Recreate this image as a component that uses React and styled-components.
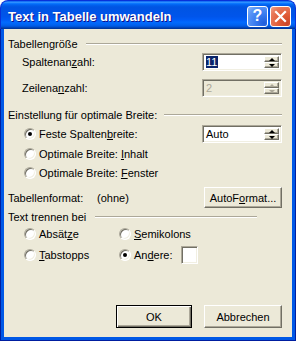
import React from 'react';
import styled, { createGlobalStyle, css } from 'styled-components';

const GlobalStyle = createGlobalStyle`
  html, body {
    margin: 0;
    padding: 0;
    background: #fff;
  }
  body {
    font-family: "Liberation Sans", Arial, sans-serif;
  }
  * {
    box-sizing: border-box;
  }
`;

const Window = styled.div`
  width: 296px;
  height: 341px;
  display: flex;
  flex-direction: column;
`;

const TitleBar = styled.div`
  height: 29px;
  flex: none;
  display: flex;
  align-items: center;
  justify-content: space-between;
  padding: 0 4px 0 7px;
  border-radius: 8px 8px 0 0;
  border: 1px solid #0831d9;
  border-bottom: none;
  background: linear-gradient(
    180deg,
    #0058ee 0%,
    #3593ff 4%,
    #288eff 6%,
    #127dff 8%,
    #036ffc 10%,
    #0262ee 14%,
    #0057e5 20%,
    #0054e3 24%,
    #0055eb 56%,
    #005bf5 66%,
    #026afe 76%,
    #0062ef 86%,
    #0052d6 92%,
    #0040ab 96%,
    #003092 100%
  );
`;

const Title = styled.span`
  color: #fff;
  font: bold 13px "Liberation Sans", Arial, sans-serif;
  text-shadow: 1px 1px #0f1089;
  padding-top: 2px;
`;

const Controls = styled.div`
  display: flex;
  gap: 2px;
  margin-top: 2px;
`;

const CapButton = styled.div`
  width: 21px;
  height: 21px;
  border: 1px solid #fff;
  border-radius: 3px;
  display: flex;
  align-items: center;
  justify-content: center;
  color: #fff;
  font: bold 16px "Liberation Sans", Arial, sans-serif;
  ${(p) =>
    p.kind === 'close'
      ? css`
          background: radial-gradient(circle at 85% 85%, #cc4628 0%, #e05a35 35%, #e8795a 75%, #f2a48c 100%);
        `
      : css`
          background: radial-gradient(circle at 85% 85%, #1f5ddb 0%, #3a7cf0 40%, #5b96f6 75%, #8cb8fa 100%);
        `}
`;

const Frame = styled.div`
  flex: 1;
  display: flex;
  background: #0058e6;
  border: 1px solid #001ea0;
  border-top: none;
  padding: 0 3px 3px;
`;

const Client = styled.div`
  flex: 1;
  display: flex;
  flex-direction: column;
  background: #ece9d8;
  padding: 6px 10px 9px 4px;
  font-size: 11px;
  color: #000;
`;

const GroupHeader = styled.div`
  display: flex;
  align-items: center;
  height: ${(p) => p.h || 18}px;
  margin-top: ${(p) => p.mt || 0}px;
  margin-right: ${(p) => p.mr || 0}px;
  gap: ${(p) => p.gap || 8}px;
`;

const Rule = styled.div`
  flex: 1;
  height: 2px;
  border-top: 1px solid #aca899;
  border-bottom: 1px solid #fff;
`;

const Row = styled.div`
  display: flex;
  align-items: center;
  height: ${(p) => p.h || 20}px;
  margin-top: ${(p) => p.mt || 0}px;
  padding-left: ${(p) => p.indent || 0}px;
`;

const Label = styled.span`
  flex: ${(p) => (p.w ? 'none' : 1)};
  width: ${(p) => (p.w ? `${p.w}px` : 'auto')};
  white-space: nowrap;
`;

const Sunken = styled.div`
  display: flex;
  align-items: stretch;
  width: ${(p) => p.w}px;
  height: ${(p) => p.h}px;
  margin-left: ${(p) => p.ml || 0}px;
  background: ${(p) => (p.disabled ? '#ece9d8' : '#fff')};
  border: 1px solid;
  border-color: #aca899 #fff #fff #aca899;
  box-shadow: inset 1px 1px #716f64, inset -1px -1px #f1efe2;
  padding: 2px;
`;

const Value = styled.div`
  flex: 1;
  display: flex;
  align-items: center;
  padding-left: 1px;
  color: ${(p) => (p.disabled ? '#aca899' : '#000')};
`;

const Selected = styled.span`
  background: #0a246a;
  color: #fff;
  padding: 0 1px 0 0;
  line-height: 12px;
`;

const Spinner = styled.div`
  width: 15px;
  display: flex;
  flex-direction: column;
`;

const SpinButton = styled.div`
  flex: 1;
  display: flex;
  align-items: center;
  justify-content: center;
  background: #ece9d8;
  border: 1px solid;
  border-color: #fff #716f64 #716f64 #fff;
  box-shadow: inset -1px -1px #aca899;
`;

const Arrow = styled.div`
  width: 0;
  height: 0;
  border-left: 3px solid transparent;
  border-right: 3px solid transparent;
  ${(p) =>
    p.dir === 'up'
      ? css`border-bottom: 3px solid ${p.disabled ? '#aca899' : '#000'};`
      : css`border-top: 3px solid ${p.disabled ? '#aca899' : '#000'};`}
`;

const Choice = styled.label`
  display: flex;
  align-items: center;
  gap: 3px;
  width: ${(p) => (p.w ? `${p.w}px` : 'auto')};
  white-space: nowrap;
`;

const RadioDot = styled.span`
  width: 12px;
  height: 12px;
  flex: none;
  border-radius: 50%;
  background: #fff;
  border: 1px solid;
  border-color: #aca899 #fff #fff #aca899;
  box-shadow: inset 1px 1px #716f64, inset -1px -1px #f1efe2;
  display: flex;
  align-items: center;
  justify-content: center;
  &::after {
    content: '';
    width: 4px;
    height: 4px;
    border-radius: 50%;
    background: ${(p) => (p.checked ? '#000' : 'transparent')};
  }
`;

const PushButton = styled.button`
  width: ${(p) => p.w}px;
  height: ${(p) => p.h || 23}px;
  padding: 0;
  font: 11px "Liberation Sans", Arial, sans-serif;
  color: #000;
  background: #ece9d8;
  border: 1px solid;
  border-color: #fff #716f64 #716f64 #fff;
  box-shadow: inset -1px -1px #aca899;
  ${(p) =>
    p.primary &&
    css`
      border-color: #000;
      box-shadow: inset 1px 1px #fff, inset -1px -1px #716f64, inset -2px -2px #aca899;
    `}
`;

const Footer = styled.div`
  margin-top: auto;
  display: flex;
  justify-content: flex-end;
  gap: 12px;
`;

const Radio = ({ checked, children, w }) => (
  <Choice w={w}>
    <RadioDot checked={checked} />
    <span>{children}</span>
  </Choice>
);

const SpinField = ({ value, disabled, selected }) => (
  <Sunken w={80} h={18} disabled={disabled}>
    <Value disabled={disabled}>{selected ? <Selected>{value}</Selected> : value}</Value>
    <Spinner>
      <SpinButton>
        <Arrow dir="up" disabled={disabled} />
      </SpinButton>
      <SpinButton>
        <Arrow dir="down" disabled={disabled} />
      </SpinButton>
    </Spinner>
  </Sunken>
);

const App = () => (
  <>
    <GlobalStyle />
    <Window>
      <TitleBar>
        <Title>Text in Tabelle umwandeln</Title>
        <Controls>
          <CapButton kind="help">?</CapButton>
          <CapButton kind="close">
            <svg width="13" height="13" viewBox="0 0 13 13">
              <path d="M2 2 L11 11 M11 2 L2 11" stroke="#fff" strokeWidth="2.2" strokeLinecap="square" />
            </svg>
          </CapButton>
        </Controls>
      </TitleBar>
      <Frame>
        <Client>
          <GroupHeader h={17}>
            <span>Tabellengröße</span>
            <Rule />
          </GroupHeader>
          <Row indent={14}>
            <Label>Spaltenan<u>z</u>ahl:</Label>
            <SpinField value="11" selected />
          </Row>
          <Row indent={14} mt={6}>
            <Label>Zeilena<u>n</u>zahl:</Label>
            <SpinField value="2" disabled />
          </Row>
          <GroupHeader mt={8} gap={7}>
            <span>Einstellung für optimale Breite:</span>
            <Rule />
          </GroupHeader>
          <Row indent={16}>
            <Label>
              <Radio checked>
                Feste Spalten<u>b</u>reite:
              </Radio>
            </Label>
            <Sunken w={80} h={18}>
              <Value>Auto</Value>
              <Spinner>
                <SpinButton>
                  <Arrow dir="up" />
                </SpinButton>
                <SpinButton>
                  <Arrow dir="down" />
                </SpinButton>
              </Spinner>
            </Sunken>
          </Row>
          <Row indent={16} h={19}>
            <Radio>
              Optimale Breite: <u>I</u>nhalt
            </Radio>
          </Row>
          <Row indent={16}>
            <Radio>
              Optimale Breite: <u>F</u>enster
            </Radio>
          </Row>
          <Row h={21} mt={4}>
            <Label w={89}>Tabellenformat:</Label>
            <Label>(ohne)</Label>
            <PushButton w={78} h={21}>
              AutoF<u>o</u>rmat...
            </PushButton>
          </Row>
          <GroupHeader h={16} mt={1} mr={25} gap={9}>
            <span>Text trennen bei</span>
            <Rule />
          </GroupHeader>
          <Row indent={16} h={17}>
            <Radio w={95}>
              Absät<u>z</u>e
            </Radio>
            <Radio>
              <u>S</u>emikolons
            </Radio>
          </Row>
          <Row indent={16} mt={3}>
            <Radio w={95}>
              <u>T</u>abstopps
            </Radio>
            <Radio checked>
              An<u>d</u>ere:
            </Radio>
            <Sunken w={17} h={18} ml={8} />
          </Row>
          <Footer>
            <PushButton w={76} primary>
              OK
            </PushButton>
            <PushButton w={78}>Abbrechen</PushButton>
          </Footer>
        </Client>
      </Frame>
    </Window>
  </>
);

export default App;
